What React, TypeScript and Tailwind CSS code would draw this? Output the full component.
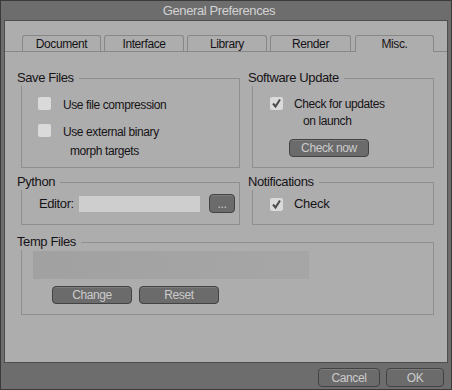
import type { ReactNode } from "react";

const Check = () => (
  <svg viewBox="0 0 13 13" className="h-[13px] w-[13px]">
    <path d="M3 6.5 L5.5 9.5 L10 2.5" fill="none" stroke="#4a4a4a" strokeWidth="2" />
  </svg>
);

const Checkbox = ({ checked = false }: { checked?: boolean }) => (
  <span className="mt-[1px] flex h-[13px] w-[13px] shrink-0 items-center justify-center rounded-[2px] bg-[#dadada]">
    {checked && <Check />}
  </span>
);

const Button = ({ label, className = "" }: { label: string; className?: string }) => (
  <button
    className={`flex items-center justify-center rounded-[4px] border border-[#424242] bg-[#6b6b6b] text-[12px] leading-none tracking-[-0.4px] text-[#cbcbcb] shadow-[inset_0_1px_0_rgba(255,255,255,0.12)] ${className}`}
  >
    {label}
  </button>
);

const Group = ({ title, children, className = "" }: { title: string; children: ReactNode; className?: string }) => (
  <div className={`flex flex-col ${className}`}>
    <div className="relative z-10 h-[16px] self-start bg-[#adadad] pr-[5px] text-[13px] leading-[16px] tracking-[-0.4px]">
      {title}
    </div>
    <div className="-mt-[8px] ml-[4px] flex-1 border border-[#8f8f8f]">{children}</div>
  </div>
);

const tabs = [
  { name: "Document", w: "w-[79px]" },
  { name: "Interface", w: "w-[80px]" },
  { name: "Library", w: "w-[80px]" },
  { name: "Render", w: "w-[81px]" },
  { name: "Misc.", w: "w-[79px] ml-[1px]", active: true },
];

export default function App() {
  return (
    <div className="flex h-[390px] w-[452px] flex-col border border-[#3a3a3a] bg-[#6d6d6d] font-['Liberation_Sans',Arial,sans-serif] text-[#161316]">
      {/* title bar */}
      <div className="h-[19px] pr-[14px] pt-[1px] text-center text-[13px] leading-[18px] tracking-[-0.4px] text-[#d2d2d2]">
        General Preferences
      </div>

      <div className="px-[3px]">
        <div className="flex h-[343px] flex-col border border-[#4e4e4e] bg-[#adadad]">
          {/* tabs */}
          <div className="flex items-end gap-[3px] border-b border-[#878787] pl-[17px] pt-[14px]">
            {tabs.map((t) => (
              <div
                key={t.name}
                className={`${t.w} rounded-t-[3px] border border-b-0 border-[#878787] bg-[#adadad] pt-[2px] text-center text-[12px] leading-[13px] tracking-[-0.4px] ${
                  t.active ? "-mb-[1px] h-[17px]" : "h-[16px]"
                }`}
              >
                {t.name}
              </div>
            ))}
          </div>

          <div className="flex flex-col pl-[12px] pr-[13px] pt-[18px]">
            <div className="grid h-[98px] grid-cols-[223px_186px] gap-x-[8px]">
              <Group title="Save Files">
                <div className="pl-[16px] pt-[17px] text-[12px] leading-[19px] tracking-[-0.4px]">
                  <div className="flex">
                    <Checkbox />
                    <span className="ml-[12px]">Use file compression</span>
                  </div>
                  <div className="mt-[8px] flex">
                    <Checkbox />
                    <div className="ml-[12px]">
                      <div>Use external binary</div>
                      <div className="pl-[7px]">morph targets</div>
                    </div>
                  </div>
                </div>
              </Group>

              <Group title="Software Update">
                <div className="pl-[17px] pt-[17px] text-[12px] leading-[17px] tracking-[-0.4px]">
                  <div className="flex">
                    <Checkbox checked />
                    <div className="ml-[11px]">
                      <div>Check for updates</div>
                      <div className="pl-[9px]">on launch</div>
                    </div>
                  </div>
                  <Button label="Check now" className="ml-[19px] mt-[9px] h-[18px] w-[80px]" />
                </div>
              </Group>
            </div>

            <div className="mt-[6px] grid h-[51px] grid-cols-[223px_186px] gap-x-[8px]">
              <Group title="Python">
                <div className="flex h-full items-center pl-[17px] text-[13px] tracking-[-0.4px]">
                  <span className="w-[40px]">Editor:</span>
                  <div className="h-[16px] w-[121px] bg-[#cecece]" />
                  <Button label="..." className="ml-[9px] h-[19px] w-[26px]" />
                </div>
              </Group>

              <Group title="Notifications">
                <div className="flex h-full items-center pl-[17px] text-[13px] tracking-[-0.3px]">
                  <Checkbox checked />
                  <span className="ml-[11px]">Check</span>
                </div>
              </Group>
            </div>

            <Group title="Temp Files" className="mt-[9px] h-[81px]">
              <div className="pl-[11px] pt-[8px]">
                <div className="h-[28px] w-[276px] bg-gradient-to-r from-[#a1a1a1] to-[#a6a6a6]" />
                <div className="ml-[19px] mt-[7px] flex gap-[7px]">
                  <Button label="Change" className="h-[18px] w-[80px]" />
                  <Button label="Reset" className="h-[18px] w-[80px]" />
                </div>
              </div>
            </Group>
          </div>
        </div>
      </div>

      {/* bottom bar */}
      <div className="flex h-[26px] justify-end gap-[6px] pr-[7px] pt-[5px]">
        <Button label="Cancel" className="h-[19px] w-[62px]" />
        <Button label="OK" className="h-[19px] w-[58px]" />
      </div>
    </div>
  );
}
